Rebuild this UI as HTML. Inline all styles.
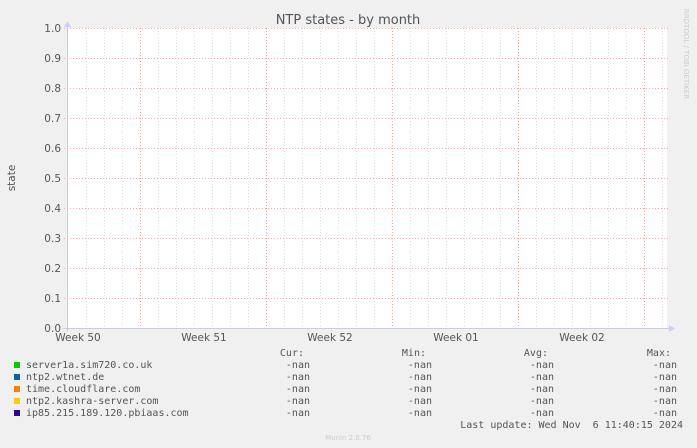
<!DOCTYPE html>
<html><head><meta charset="utf-8"><style>
html,body{margin:0;padding:0;background:#f0f0f0;}
svg{display:block}
.t{font-family:"DejaVu Sans","Liberation Sans",sans-serif;fill:#555;}
.m{font-family:"DejaVu Sans Mono","Liberation Mono",monospace;font-size:10px;fill:#555;white-space:pre;}
</style></head><body>
<svg width="697" height="448" xmlns="http://www.w3.org/2000/svg">
<rect width="697" height="448" fill="#f0f0f0"/>
<rect x="67" y="28" width="600" height="300" fill="#fff"/>
<path d="M86 28V328M104 28V328M122 28V328M158 28V328M176 28V328M194 28V328M212 28V328M230 28V328M248 28V328M284 28V328M302 28V328M320 28V328M338 28V328M356 28V328M374 28V328M410 28V328M428 28V328M446 28V328M464 28V328M482 28V328M500 28V328M536 28V328M554 28V328M572 28V328M590 28V328M608 28V328M626 28V328M662 28V328" stroke="#ddd" stroke-width="1" stroke-dasharray="1,2" fill="none" transform="translate(0.5,0)"/>
<path d="M140 28V328M266 28V328M392 28V328M518 28V328M644 28V328" stroke="#f4a0a0" stroke-width="1" stroke-dasharray="1,2" fill="none" transform="translate(0.5,0)"/>
<path d="M64 28H669M64 58H669M64 88H669M64 118H669M64 148H669M64 178H669M64 208H669M64 238H669M64 268H669M64 298H669" stroke="#f0b0b0" stroke-width="1" stroke-dasharray="1,2" fill="none" transform="translate(0,0.5)"/>
<path d="M67.5 24V332M63 328.5H671" stroke="#ccd" stroke-width="1" fill="none"/>
<path d="M64 27L67.5 21L71 27Z M669 325L675 328.5L669 332Z" fill="#ccf"/>
<g class="t" font-size="10.5" text-anchor="end">
<text x="61" y="32">1.0</text><text x="61" y="62">0.9</text><text x="61" y="92">0.8</text><text x="61" y="122">0.7</text><text x="61" y="152">0.6</text><text x="61" y="182">0.5</text><text x="61" y="212">0.4</text><text x="61" y="242">0.3</text><text x="61" y="272">0.2</text><text x="61" y="302">0.1</text><text x="61" y="332">0.0</text>
</g>
<g class="t" font-size="10.5" text-anchor="middle">
<text x="78" y="341">Week 50</text><text x="204" y="341">Week 51</text><text x="330" y="341">Week 52</text><text x="456" y="341">Week 01</text><text x="582" y="341">Week 02</text>
</g>
<text class="t" x="348" y="24" font-size="13" text-anchor="middle">NTP states - by month</text>
<text class="t" x="0" y="0" font-size="10.5" text-anchor="middle" transform="translate(15,178) rotate(-90)">state</text>
<text x="0" y="0" font-family="DejaVu Sans,sans-serif" font-size="7" fill="#ccc" text-anchor="middle" transform="translate(684,54) rotate(90)">RRDTOOL / TOBI OETIKER</text>
<rect x="14" y="362" width="6" height="6" fill="#00cc00"/>
<rect x="14" y="374" width="6" height="6" fill="#0066b3"/>
<rect x="14" y="386" width="6" height="6" fill="#ff8000"/>
<rect x="14" y="398" width="6" height="6" fill="#ffcc00"/>
<rect x="14" y="410" width="6" height="6" fill="#330099"/>
<g class="m">
<text x="26" y="368">server1a.sim720.co.uk</text>
<text x="26" y="380">ntp2.wtnet.de</text>
<text x="26" y="392">time.cloudflare.com</text>
<text x="26" y="404">ntp2.kashra-server.com</text>
<text x="26" y="416">ip85.215.189.120.pbiaas.com</text>
</g>
<g class="m" text-anchor="end">
<text x="304" y="356">Cur:</text><text x="426" y="356">Min:</text><text x="548" y="356">Avg:</text><text x="671" y="356">Max:</text>
<text x="310" y="368">-nan</text><text x="432" y="368">-nan</text><text x="554" y="368">-nan</text><text x="677" y="368">-nan</text>
<text x="310" y="380">-nan</text><text x="432" y="380">-nan</text><text x="554" y="380">-nan</text><text x="677" y="380">-nan</text>
<text x="310" y="392">-nan</text><text x="432" y="392">-nan</text><text x="554" y="392">-nan</text><text x="677" y="392">-nan</text>
<text x="310" y="404">-nan</text><text x="432" y="404">-nan</text><text x="554" y="404">-nan</text><text x="677" y="404">-nan</text>
<text x="310" y="416">-nan</text><text x="432" y="416">-nan</text><text x="554" y="416">-nan</text><text x="677" y="416">-nan</text>
<text x="683" y="428" xml:space="preserve">Last update: Wed Nov  6 11:40:15 2024</text>
</g>
<text x="348" y="440" font-family="DejaVu Sans,sans-serif" font-size="7" fill="#ccc" text-anchor="middle">Munin 2.0.76</text>
</svg>
</body></html>
